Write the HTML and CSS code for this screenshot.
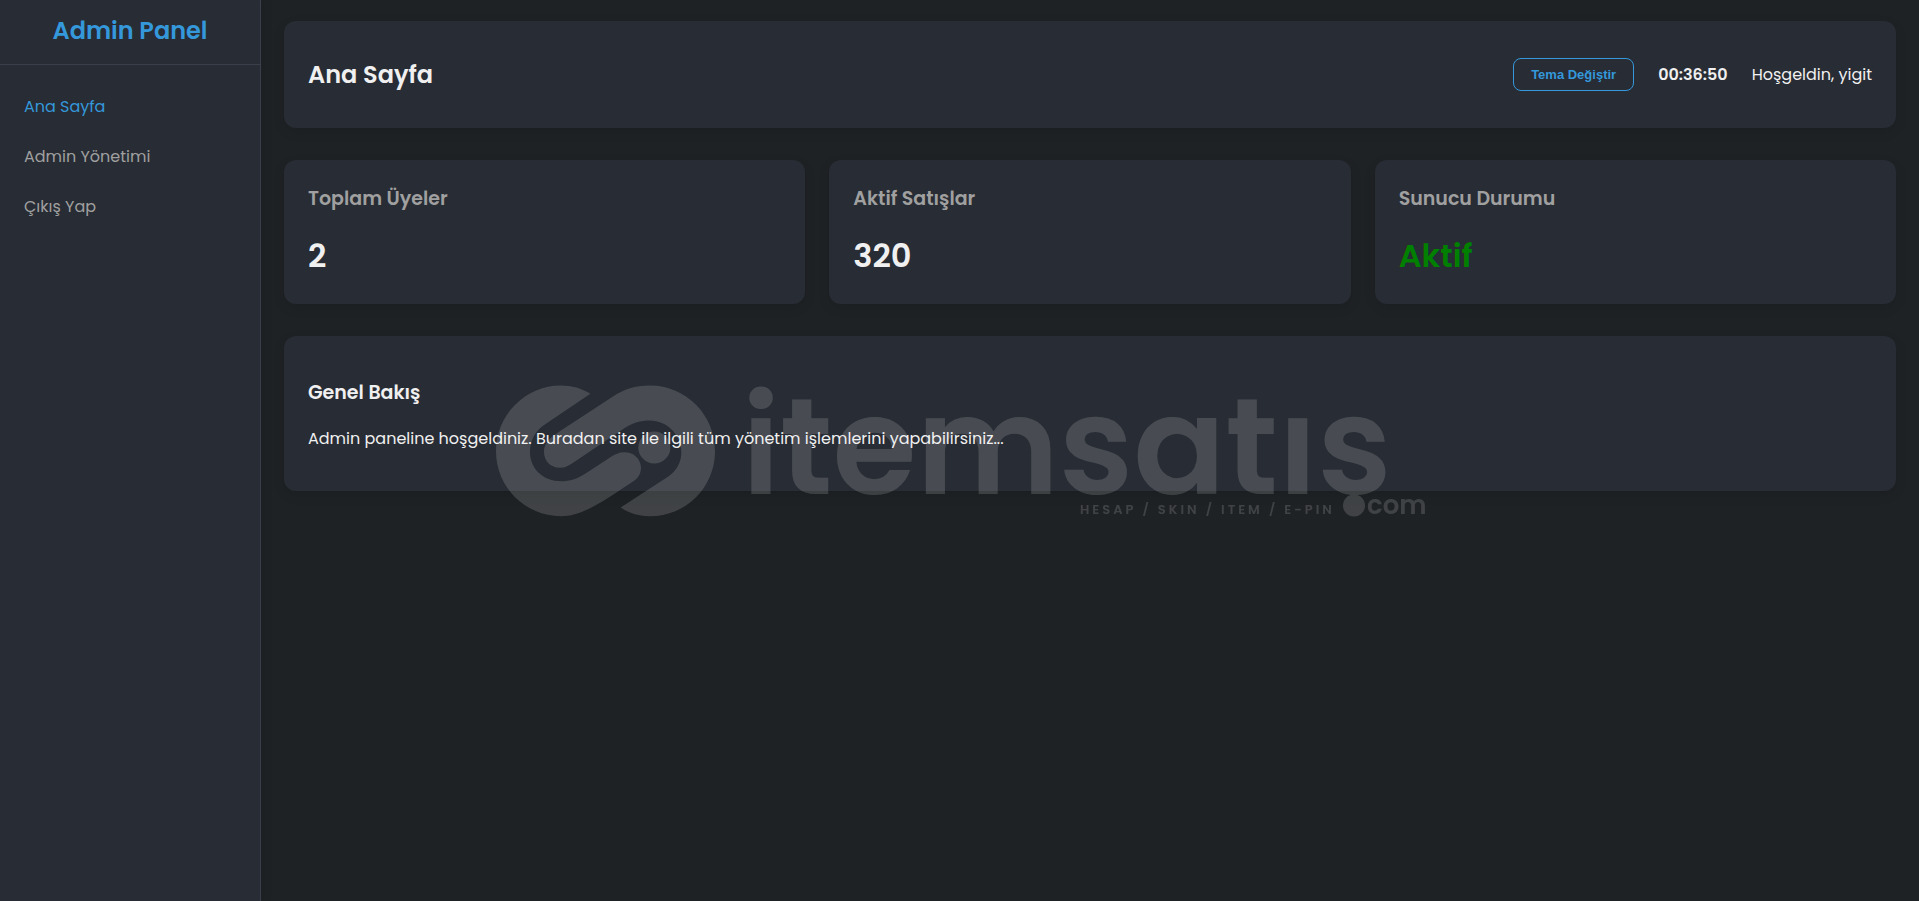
FILE: index.html
```html
<!DOCTYPE html>
<html lang="tr">
<head>
<meta charset="utf-8">
<title>Admin Panel</title>
<meta name="viewport" content="width=device-width, initial-scale=1">
<link rel="stylesheet" href="styles.css">
</head>
<body>
<div class="layout">
  <aside class="sidebar">
    <div class="brand">Admin Panel</div>
    <nav class="menu">
      <a class="menu-link active" href="#">Ana Sayfa</a>
      <a class="menu-link" href="#">Admin Yönetimi</a>
      <a class="menu-link" href="#">Çıkış Yap</a>
    </nav>
  </aside>
  <main class="content">
    <header class="card topbar">
      <h1 class="page-title">Ana Sayfa</h1>
      <div class="tools">
        <button class="theme-button" type="button">Tema Değiştir</button>
        <span class="clock">00:36:50</span>
        <span>Hoşgeldin, yigit</span>
      </div>
    </header>
    <section class="stats">
      <article class="card stat">
        <h2 class="stat-label">Toplam Üyeler</h2>
        <p class="stat-value">2</p>
      </article>
      <article class="card stat">
        <h2 class="stat-label">Aktif Satışlar</h2>
        <p class="stat-value">320</p>
      </article>
      <article class="card stat">
        <h2 class="stat-label">Sunucu Durumu</h2>
        <p class="stat-value online">Aktif</p>
      </article>
    </section>
    <section class="card overview">
      <h2 class="overview-title">Genel Bakış</h2>
      <p class="overview-text">Admin paneline hoşgeldiniz. Buradan site ile ilgili tüm yönetim işlemlerini yapabilirsiniz...</p>
    </section>
  </main>
</div>
<svg class="watermark" viewBox="495 384 930 133" aria-hidden="true">
  <g transform="translate(480 360) scale(.33333)">
    <path d="M331 100C305 83 275 75 243 75C135 75 48 165 48 272C48 380 135 467 243 467C298 467 345 440 459 363C477 351 483 337 483 320C481 293 460 275 433 275C417 275 405 281 390 291L318 338C290 356 270 362 243 362C190 362 150 325 150 275C150 240 165 213 190 195Z"/>
    <path d="M422 441C450 460 480 467 510 467C618 467 705 380 705 272C705 163 618 75 510 75C465 75 432 87 400 107L235 215C205 235 192 250 192 274C192 302 212 322 240 322C255 322 265 316 277 308L435 202C460 186 480 180 510 180C560 180 604 222 604 275C604 305 590 330 565 348Z"/>
    <circle cx="523" cy="261" r="48"/>
  </g>
  <text class="wordmark" x="742" y="493">itemsatıs</text>
  <text class="tagline" x="1080" y="513">HESAP / SKIN / ITEM / E-PIN</text>
  <circle cx="1354" cy="505" r="11"/>
  <text class="domain" x="1367" y="513">com</text>
</svg>
</body>
</html>
```
FILE: styles.css
```css
* {
  box-sizing: border-box;
}

body {
  margin: 0;
  background: #1f2225;
  color: #f0f0f0;
  font-family: Poppins, Inter, sans-serif;
  font-size: 16px;
  line-height: 24px;
}

h1, h2, p {
  margin: 0;
}

.layout {
  display: flex;
  min-height: 100vh;
}

.sidebar {
  flex: 0 0 261px;
  background: #282c34;
  border-right: 1px solid #3a3f4b;
  box-shadow: 2px 0 10px rgba(0, 0, 0, .1);
}

.brand {
  padding: 13px 24px 15px;
  border-bottom: 1px solid #3a3f4b;
  color: #3498db;
  font-size: 24px;
  font-weight: 600;
  line-height: 36px;
  text-align: center;
}

.menu {
  display: flex;
  flex-direction: column;
  padding-top: 17px;
}

.menu-link {
  padding: 13px 24px;
  color: #a0a0a0;
  text-decoration: none;
}

.menu-link.active {
  color: #3498db;
}

.content {
  flex: 1;
  display: flex;
  flex-direction: column;
  gap: 32px;
  padding: 21px 23px;
}

.card {
  background: #282c34;
  border-radius: 12px;
  box-shadow: 0 4px 12px rgba(0, 0, 0, .1);
}

.topbar {
  display: flex;
  align-items: center;
  justify-content: space-between;
  padding: 36px 24px;
}

.page-title {
  font-size: 24px;
  font-weight: 600;
  line-height: 35px;
}

.tools {
  display: flex;
  align-items: center;
  gap: 24px;
}

.theme-button {
  padding: 8px 17px;
  border: 1px solid #3498db;
  border-radius: 8px;
  background: transparent;
  color: #3498db;
  font-family: "Liberation Sans", Arial, sans-serif;
  font-size: 13px;
  font-weight: 700;
  line-height: 15px;
}

.clock {
  font-weight: 600;
}

.stats {
  display: grid;
  grid-template-columns: repeat(3, 1fr);
  gap: 24px;
}

.stat {
  padding: 25px 24px 22px;
}

.stat-label {
  margin-bottom: 17px;
  color: #a0a0a0;
  font-size: 19px;
  font-weight: 600;
  line-height: 28px;
}

.stat-value {
  font-size: 32px;
  font-weight: 600;
  line-height: 52px;
}

.online {
  color: #008000;
}

.overview {
  padding: 41px 24px 40px;
}

.overview-title {
  margin-bottom: 18px;
  font-size: 19px;
  font-weight: 600;
  line-height: 32px;
}

.watermark {
  position: fixed;
  top: 50%;
  left: 50%;
  width: 930px;
  max-width: 90vw;
  overflow: visible;
  transform: translate(-50%, -50%);
  fill: #fff;
  opacity: .15;
  pointer-events: none;
}

.wordmark {
  font-size: 136px;
  font-weight: 600;
}

.tagline {
  font-size: 13px;
  font-weight: 600;
  letter-spacing: 3px;
}

.domain {
  font-size: 26px;
  font-weight: 600;
}
```
